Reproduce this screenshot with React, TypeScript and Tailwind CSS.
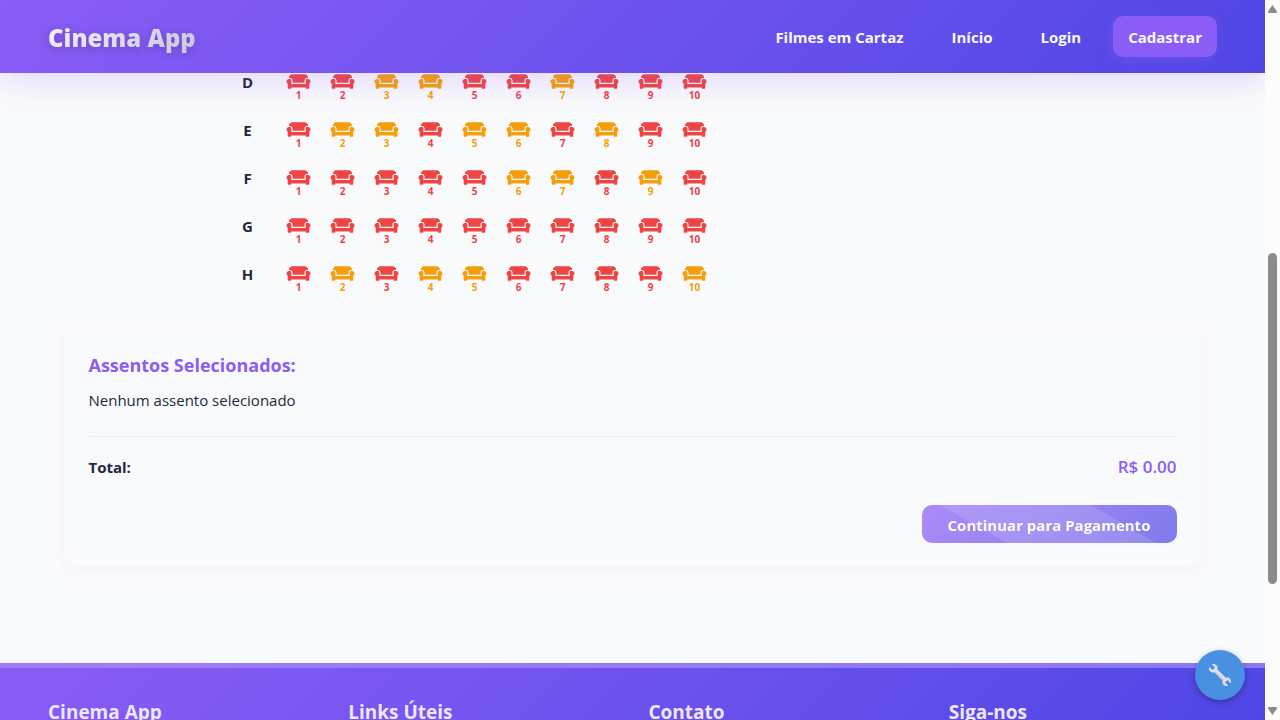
import { FaCouch } from "react-icons/fa";

const rows = [
  { id: "D", seats: "rryyrryrrr" },
  { id: "E", seats: "ryyryyryrr" },
  { id: "F", seats: "rrrrryyryr" },
  { id: "G", seats: "rrrrrrrrrr" },
  { id: "H", seats: "ryryyrrrry" },
];

const footerColumns = ["Cinema App", "Links Úteis", "Contato", "Siga-nos"];

function Header() {
  return (
    <header className="relative z-10 flex h-[73px] shrink-0 items-center justify-between bg-linear-135 from-[#8b5cf6] to-[#4f46e5] px-12 shadow-[0_8px_32px_rgba(139,92,246,0.2)]">
      <a
        href="#inicio"
        className="bg-linear-135 from-[#f4f2fa] to-[#c9c5e0] bg-clip-text pt-0.5 text-2xl font-extrabold text-transparent drop-shadow-[0_2px_4px_rgba(0,0,0,0.2)]"
      >
        Cinema App
      </a>
      <nav className="flex items-center gap-4 text-[15px] font-bold text-[#f8f9ff]">
        <a href="#filmes" className="px-4 pt-[10px] pb-2">Filmes em Cartaz</a>
        <a href="#inicio" className="px-4 pt-[10px] pb-2">Início</a>
        <a href="#login" className="px-4 pt-[10px] pb-2">Login</a>
        <a href="#cadastrar" className="rounded-[10px] bg-[#8b5cf6] px-[15px] pt-[10px] pb-2 shadow-[0_4px_15px_rgba(139,92,246,0.3)]">
          Cadastrar
        </a>
      </nav>
    </header>
  );
}

function SeatMap() {
  return (
    <div className="flex flex-col gap-2 pl-[168px]">
      {rows.map((row) => (
        <div key={row.id} className="flex h-10 items-start">
          <span className="w-[30px] text-center text-[15px] leading-[26px] font-bold">{row.id}</span>
          <div className="ml-[18px] flex gap-2">
            {row.seats.split("").map((state, i) => (
              <button
                key={i}
                type="button"
                aria-label={`Assento ${row.id}${i + 1}`}
                className={`flex h-10 w-9 flex-col items-center pt-0.5 text-[10px] leading-[9px] font-bold ${state === "r" ? "text-[#ef4444]" : "text-[#f59e0b]"}`}
              >
                <FaCouch className="h-5 w-6 overflow-visible" viewBox="13 -13 640 512" />
                {i + 1}
              </button>
            ))}
          </div>
        </div>
      ))}
    </div>
  );
}

function Summary() {
  return (
    <section className="mt-[26px] rounded-xl bg-[#f9fafc] p-6 shadow-[0_4px_12px_rgba(139,92,246,0.05)]">
      <h3 className="text-lg leading-7 font-bold text-[#8b5cf6]">Assentos Selecionados:</h3>
      <p className="mt-2 text-[15px] leading-[26px]">Nenhum assento selecionado</p>
      <div className="mt-[23px] flex items-center justify-between border-t border-[#edeff7] pt-4">
        <span className="text-[15px] leading-7 font-bold">Total:</span>
        <span className="text-[17px] leading-7 font-semibold text-[#8b5cf6]">R$ 0.00</span>
      </div>
      <div className="mt-6 flex justify-end">
        <button
          type="button"
          disabled
          className="relative h-[38px] w-[255px] overflow-hidden rounded-[10px] bg-linear-135 from-[#8b5cf6] to-[#4f46e5] pt-0.5 text-[15px] font-bold text-white opacity-70"
        >
          <svg className="absolute inset-0 size-full" viewBox="0 0 256 38" preserveAspectRatio="none" aria-hidden="true">
            <path d="M18 0H169L235 38H85Z" fill="#fff" fillOpacity="0.13" />
          </svg>
          <span className="relative">Continuar para Pagamento</span>
        </button>
      </div>
    </section>
  );
}

function Footer() {
  return (
    <footer className="shrink-0 border-t-[5px] border-[#a78bfa]/70 bg-linear-135 from-[#8b5cf6] to-[#4f46e5] bg-origin-border px-12 pt-[30px]">
      <div className="grid grid-cols-4 gap-8">
        {footerColumns.map((title) => (
          <h4 key={title} className="text-[19px] leading-7 font-bold text-[#ece7fe]">{title}</h4>
        ))}
      </div>
    </footer>
  );
}

function WrenchIcon() {
  return (
    <svg className="size-6" viewBox="0 0 24 24" aria-hidden="true">
      <path d="M6 6 18 18" stroke="#eadcf2" strokeWidth="4" />
      <path d="M7.5 9 16 17.5" stroke="#cdb9dd" strokeWidth="1" />
      <path d="M3.8 1.2 6.8 4.2 6.2 6.1 4.2 6.7 1.2 3.8C.3 6.5 2.1 9.8 5.3 9.7L9.7 5.3C9.8 2.1 6.5.3 3.8 1.2Z" fill="#e3dce9" />
      <path d="M20.2 22.8 17.2 19.8 17.8 17.9 19.8 17.3 22.8 20.2C23.7 17.5 21.9 14.2 18.7 14.3L14.3 18.7C14.2 21.9 17.5 23.7 20.2 22.8Z" fill="#e3dce9" />
    </svg>
  );
}

function ScrollBar() {
  return (
    <div className="flex h-screen w-[15px] shrink-0 flex-col items-center justify-between bg-[#fcfcfc] py-1" aria-hidden="true">
      <svg className="h-[9px] w-[11px]" viewBox="0 0 11 9"><path d="M5.5 1 10 7.5Q10 9 9 9H2Q1 9 1 7.5Z" fill="#8b8b8b" /></svg>
      <div className="mt-[116px] h-[331px] w-[9px] rounded-full bg-[#8b8b8b]" />
      <svg className="h-[9px] w-[11px]" viewBox="0 0 11 9"><path d="M5.5 8 10 1.5Q10 0 9 0H2Q1 0 1 1.5Z" fill="#8b8b8b" /></svg>
    </div>
  );
}

export default function App() {
  return (
    <div className="flex h-screen overflow-hidden bg-[#f9fafc] font-['Open_Sans','Noto_Sans',sans-serif] text-[#1e293b]">
      <div className="relative flex min-w-0 flex-1 flex-col overflow-hidden">
        <Header />
        <main className="mx-auto -mt-1 w-full max-w-[1200px] shrink-0 px-8 pb-24">
          <SeatMap />
          <Summary />
        </main>
        <Footer />
        <button
          type="button"
          aria-label="Ferramentas"
          className="absolute right-5 bottom-5 z-20 flex size-[50px] items-center justify-center rounded-full bg-[#4a90e2] shadow-[0_2px_6px_rgba(0,0,0,0.3)]"
        >
          <WrenchIcon />
        </button>
      </div>
      <ScrollBar />
    </div>
  );
}
